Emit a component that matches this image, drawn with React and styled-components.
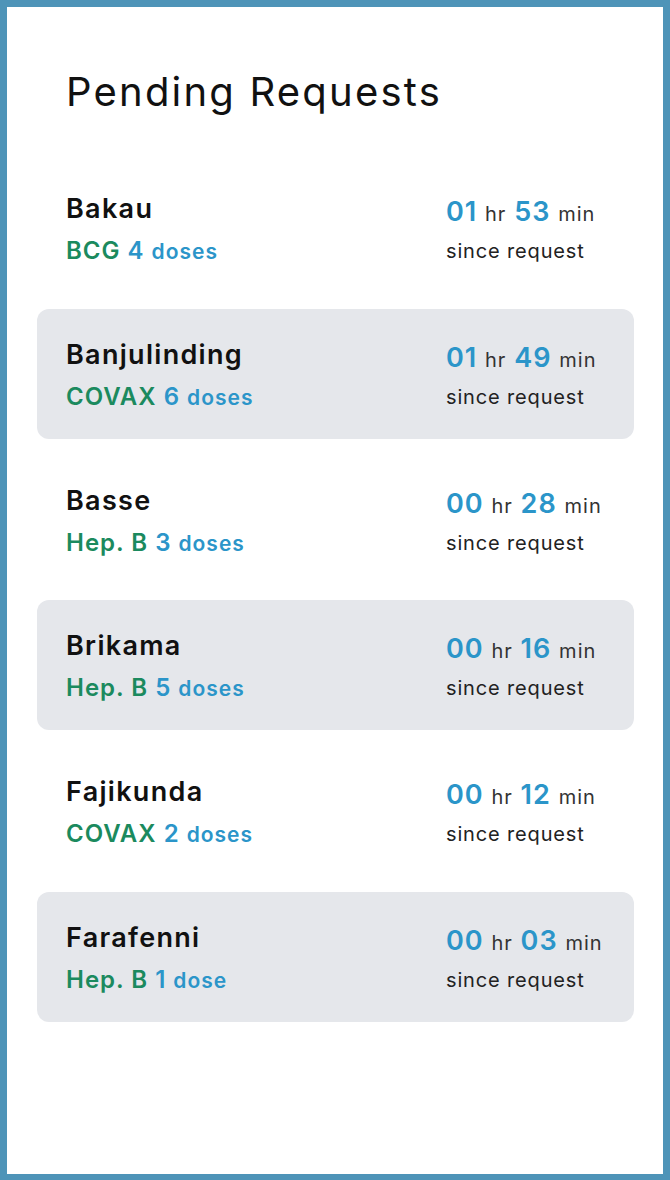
import React from 'react';
import styled, { createGlobalStyle } from 'styled-components';

const GlobalStyle = createGlobalStyle`
  html, body {
    margin: 0;
    padding: 0;
    background: #ffffff;
  }
  * {
    box-sizing: border-box;
  }
`;

const requests = [
  { site: 'Bakau', vaccine: 'BCG', doses: 4, hr: '01', min: '53' },
  { site: 'Banjulinding', vaccine: 'COVAX', doses: 6, hr: '01', min: '49' },
  { site: 'Basse', vaccine: 'Hep. B', doses: 3, hr: '00', min: '28' },
  { site: 'Brikama', vaccine: 'Hep. B', doses: 5, hr: '00', min: '16' },
  { site: 'Fajikunda', vaccine: 'COVAX', doses: 2, hr: '00', min: '12' },
  { site: 'Farafenni', vaccine: 'Hep. B', doses: 1, hr: '00', min: '03' },
];

const Frame = styled.div`
  width: 670px;
  height: 1180px;
  border: 7px solid #4e94b8;
  border-bottom-width: 6px;
  background: #ffffff;
  font-family: Inter, "Liberation Sans", sans-serif;
  padding: 61px 29px 0 30px;
`;

const Title = styled.h1`
  margin: 0 0 47px 29px;
  font-size: 40px;
  line-height: 48px;
  font-weight: 400;
  letter-spacing: 2.2px;
  color: #111111;
`;

const List = styled.ul`
  list-style: none;
  margin: 0;
  padding: 0;
  display: flex;
  flex-direction: column;
  gap: 15.8px;
`;

const Row = styled.li`
  height: 130px;
  border-radius: 12px;
  background: ${(p) => (p.$shaded ? '#e5e7eb' : 'transparent')};
  padding: 30px 29px 0 29px;
  display: grid;
  grid-template-columns: 1fr 159px;
`;

const Site = styled.div`
  font-size: 27px;
  line-height: 32px;
  font-weight: 600;
  letter-spacing: 1.3px;
  color: #111111;
`;

const Dosage = styled.div`
  margin-top: 12px;
  font-size: 24px;
  line-height: 28px;
  font-weight: 600;
  letter-spacing: 1px;
  color: #2b95c9;
`;

const Vaccine = styled.span`
  color: #1b8a5e;
`;

const Small = styled.span`
  font-size: 21px;
`;

const Elapsed = styled.div`
  margin-top: 3px;
  font-size: 27px;
  line-height: 32px;
  font-weight: 600;
  letter-spacing: 1px;
  color: #2b95c9;
  white-space: nowrap;
`;

const Unit = styled.span`
  font-size: 20px;
  font-weight: 400;
  color: #333333;
`;

const Since = styled.div`
  margin-top: 7px;
  font-size: 20px;
  line-height: 28px;
  letter-spacing: 0.85px;
  color: #222222;
`;

export default function App() {
  return (
    <>
      <GlobalStyle />
      <Frame>
        <Title>Pending Requests</Title>
        <List>
          {requests.map((r, i) => (
            <Row key={r.site} $shaded={i % 2 === 1}>
              <div>
                <Site>{r.site}</Site>
                <Dosage>
                  <Vaccine>{r.vaccine}</Vaccine> {r.doses}{' '}
                  <Small>{r.doses === 1 ? 'dose' : 'doses'}</Small>
                </Dosage>
              </div>
              <div>
                <Elapsed>
                  {r.hr} <Unit>hr</Unit> {r.min} <Unit>min</Unit>
                </Elapsed>
                <Since>since request</Since>
              </div>
            </Row>
          ))}
        </List>
      </Frame>
    </>
  );
}
